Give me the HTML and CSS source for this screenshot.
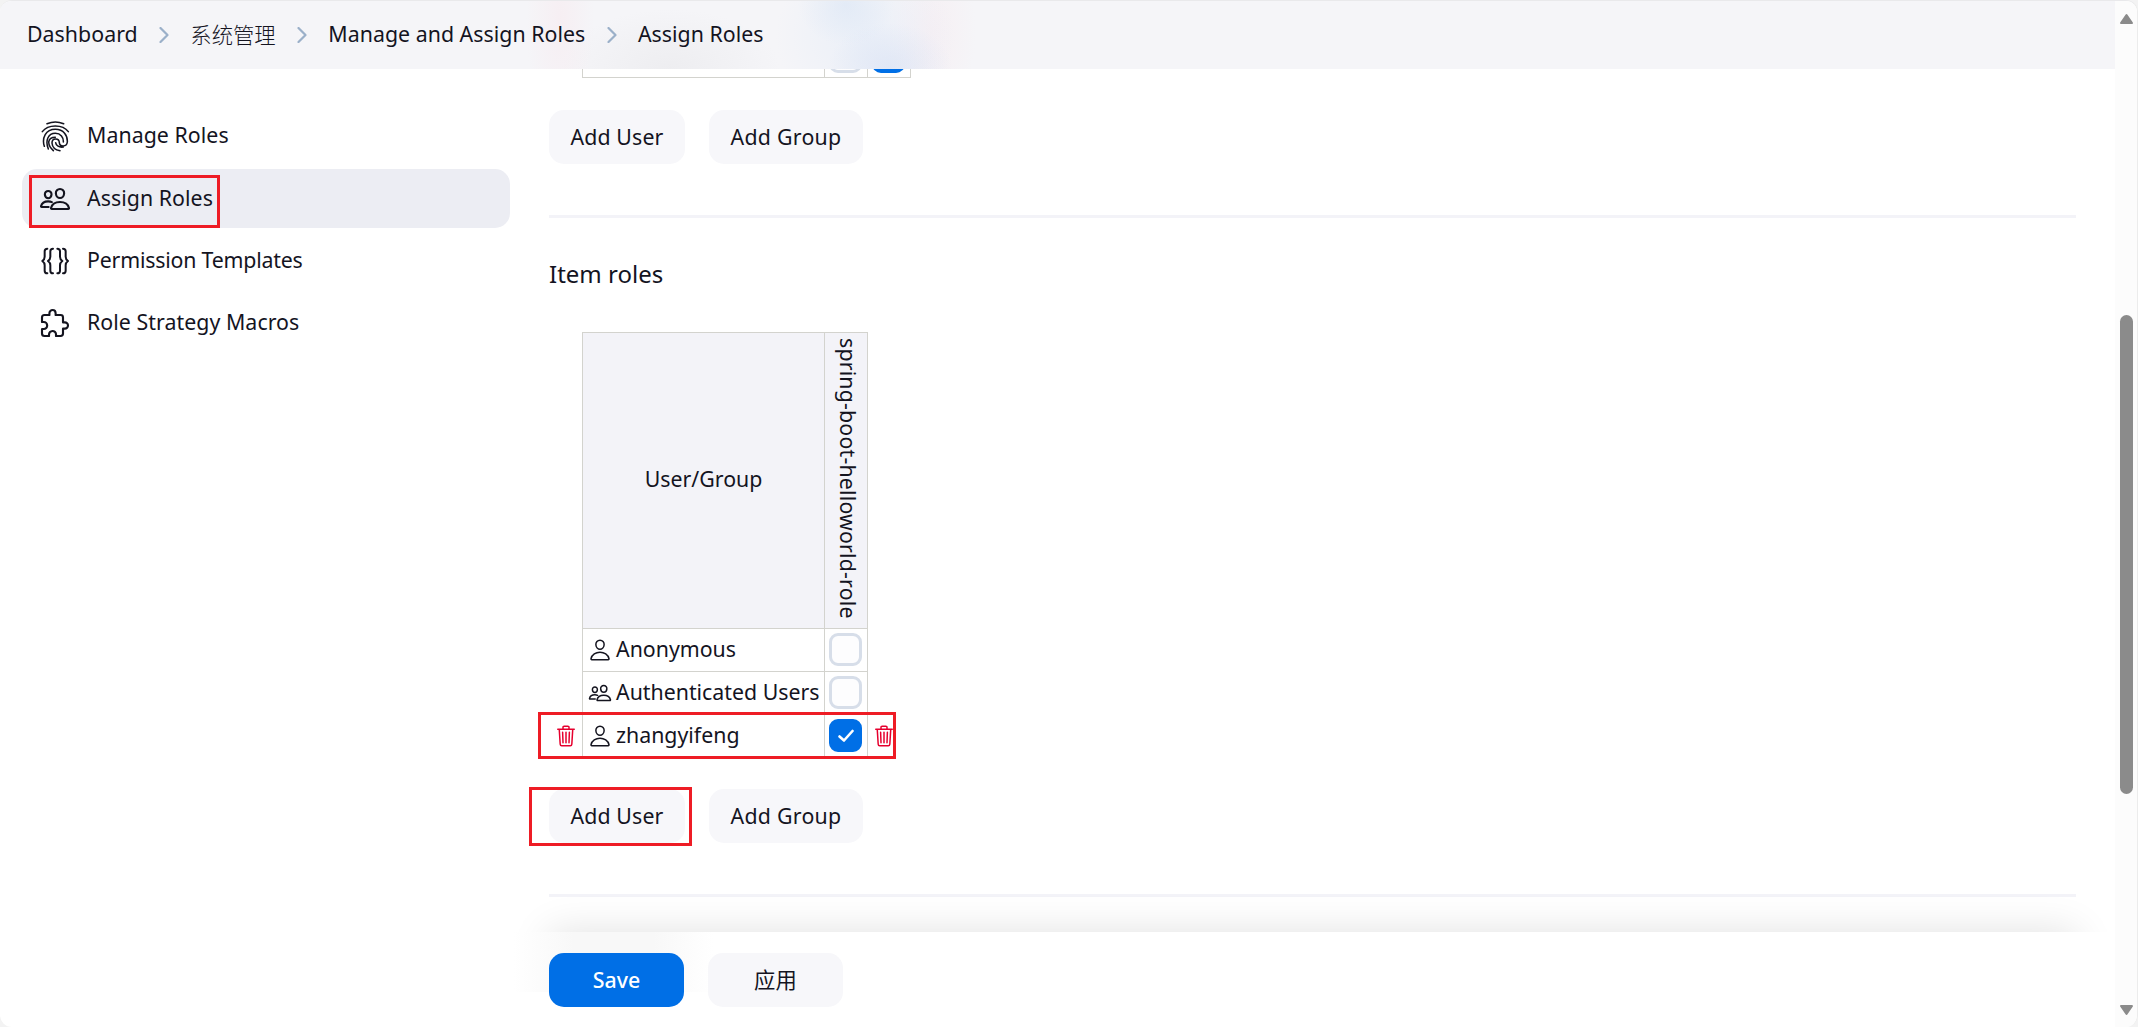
FILE: index.html
```html
<!DOCTYPE html>
<html lang="en">
<head>
<meta charset="utf-8">
<title>Assign Roles</title>
<link rel="stylesheet" href="styles.css">
</head>
<body>
<svg class="defs" aria-hidden="true">
  <symbol id="people" viewBox="0 0 512 512">
    <path d="M402 168c-2.93 40.67-33.1 72-66 72s-63.12-31.32-66-72c-3-42.31 26.37-72 66-72s69 30.46 66 72z"/>
    <path d="M336 304c-65.17 0-127.84 32.37-143.54 95.41-2.08 8.34 3.15 16.59 11.72 16.59h263.65c8.57 0 13.77-8.25 11.72-16.59C463.85 335.36 401.18 304 336 304z"/>
    <path d="M200 185.94c-2.34 32.48-26.72 58.06-53 58.06s-50.7-25.57-53-58.06C91.61 152.15 115.34 128 147 128s55.39 24.77 53 57.94z"/>
    <path d="M206 306c-18.05-8.27-37.93-11.45-59-11.45-52 0-102.1 25.85-114.65 76.2-1.65 6.66 2.53 13.25 9.37 13.25H154"/>
  </symbol>
  <symbol id="person" viewBox="0 0 512 512">
    <path d="M344 144c-3.92 52.87-44 96-88 96s-84.15-43.12-88-96c-4-55 35-96 88-96s92 42 88 96z"/>
    <path d="M256 304c-87 0-175.3 48-191.64 138.6C62.39 453.52 68.57 464 80 464h352c11.44 0 17.62-10.48 15.65-21.4C431.3 352 343 304 256 304z"/>
  </symbol>
  <symbol id="trash" viewBox="0 0 512 512">
    <path d="M112 112l20 320c.95 18.49 14.4 32 32 32h184c17.67 0 30.87-13.51 32-32l20-320M80 112h352M192 112V72a23.93 23.93 0 0124-24h80a23.93 23.93 0 0124 24v40M256 176v224M184 176l8 224M328 176l-8 224"/>
  </symbol>
  <symbol id="chevron" viewBox="0 0 10 16">
    <path d="M1.5 1 8.5 8 1.5 15"/>
  </symbol>
</svg>

<div class="window">
  <div class="viewport">
    <header class="breadcrumbs">
      <a class="crumb">Dashboard</a>
      <svg class="chevron"><use href="#chevron"/></svg>
      <a class="crumb cjk">系统管理</a>
      <svg class="chevron"><use href="#chevron"/></svg>
      <a class="crumb">Manage and Assign Roles</a>
      <svg class="chevron"><use href="#chevron"/></svg>
      <a class="crumb">Assign Roles</a>
    </header>

    <div class="page">
      <nav class="sidebar">
        <a class="task">
          <svg class="task-icon finger" viewBox="0 0 96 96"><path d="M24 11Q49 1 74 11M10 35C27 12 71 12 88 35M16 79C8 54 20 28 49 28C74 28 86 46 85 66C83 82 62 81 61 68C60 53 39 54 39 69C40 83 49 90 63 92M28 87C18 62 27 40 49 40C65 40 74 52 73 66M43 92C22 72 26 52 49 52M50 68C51 77 60 83 73 81"/></svg>
          <span>Manage Roles</span>
        </a>
        <a class="task task-active">
          <svg class="task-icon ion"><use href="#people"/></svg>
          <span>Assign Roles</span>
        </a>
        <a class="task">
          <svg class="task-icon braces" viewBox="0 0 96 96"><path d="M25 11Q17 11 17 19V35Q17 43 10 48Q17 53 17 61V77Q17 85 25 85M42 11Q34 11 34 19V35Q34 43 27 48Q34 53 34 61V77Q34 85 42 85M55 11Q63 11 63 19V35Q63 43 70 48Q63 53 63 61V77Q63 85 55 85M72 11Q80 11 80 19V35Q80 43 87 48Q80 53 80 61V77Q80 85 72 85"/></svg>
          <span class="t-templates">Permission Templates</span>
        </a>
        <a class="task">
          <svg class="task-icon ion" viewBox="0 0 512 512"><path d="M413.66 246.1H386a2 2 0 01-2-2v-77.24A38.86 38.86 0 00345.14 128H267.9a2 2 0 01-2-2V98.34c0-27.14-21.5-49.86-48.64-50.33a49.53 49.53 0 00-50.4 49.51V126a2 2 0 01-2 2H87.62A39.74 39.74 0 0048 167.62V238a2 2 0 002 2h26.91c29.37 0 53.68 25.48 54.09 54.85.42 29.87-23.51 57.15-53.29 57.15H50a2 2 0 00-2 2v70.38A39.74 39.74 0 0087.62 464H158a2 2 0 002-2v-20.93c0-30.28 24.75-56.35 55-57.06 30.1-.7 57 20.31 57 50.28V462a2 2 0 002 2h71.14A38.86 38.86 0 00384 425.14v-78a2 2 0 012-2h28.48c27.63 0 49.52-22.67 49.52-50.4s-23.2-48.64-50.34-48.64z"/></svg>
          <span>Role Strategy Macros</span>
        </a>
      </nav>

      <main class="main">
        <div class="table-tail">
          <div class="tail-name"></div>
          <div class="tail-cell"><span class="check"></span></div>
          <div class="tail-cell"><span class="check check-on"></span></div>
        </div>
        <div class="actions">
          <button class="button">Add User</button>
          <button class="button button-group">Add Group</button>
        </div>
        <hr class="rule">
        <h2 class="heading">Item roles</h2>

        <div class="roles">
          <div class="cell head">User/Group</div>
          <div class="cell head last"><span class="vertical">spring-boot-helloworld-role</span></div>

          <div class="cell name"><svg class="icon"><use href="#person"/></svg><span>Anonymous</span></div>
          <div class="cell last box"><span class="check"></span></div>

          <div class="cell name"><svg class="icon"><use href="#people"/></svg><span>Authenticated Users</span></div>
          <div class="cell last box"><span class="check"></span></div>

          <svg class="icon trash trash-left"><use href="#trash"/></svg>
          <div class="cell name bottom"><svg class="icon"><use href="#person"/></svg><span>zhangyifeng</span></div>
          <div class="cell last box bottom"><span class="check check-on"><svg class="tick" viewBox="0 0 16 14"><path d="M1.5 7.5 6 11.5 14.5 2"/></svg></span></div>
          <svg class="icon trash trash-right"><use href="#trash"/></svg>
        </div>

        <div class="actions actions-item">
          <button class="button">Add User</button>
          <button class="button button-group">Add Group</button>
        </div>
        <hr class="rule">
        <div class="shade"></div>
      </main>

      <footer class="footer">
        <button class="button primary">Save</button>
        <button class="button cjk">应用</button>
      </footer>
    </div>
  </div>

  <div class="scrollbar">
    <svg class="arrow" viewBox="0 0 15 12"><path d="M7.5 2 13 10H2z"/></svg>
    <div class="thumb"></div>
    <svg class="arrow" viewBox="0 0 15 12"><path d="M7.5 10 13 2H2z"/></svg>
  </div>
</div>

<div class="mark mark-nav"></div>
<div class="mark mark-row"></div>
<div class="mark mark-add"></div>
</body>
</html>
```
FILE: styles.css
```css
* { box-sizing: border-box; }

body {
  margin: 0;
  width: 2138px;
  height: 1027px;
  overflow: hidden;
  position: relative;
  background: #f3f3f3;
  color: #14141f;
  font: 21.33px/30px "Noto Sans", "Noto Sans CJK SC", sans-serif;
}

.defs { display: none; }

.window {
  display: flex;
  height: 1027px;
  border-top: 1px solid #e9e9eb;
  border-right: 1px solid #ececec;
  border-radius: 12px;
  overflow: hidden;
  background: #fff;
}

.viewport {
  flex: 1;
  display: flex;
  flex-direction: column;
}

/* Breadcrumb bar */
.breadcrumbs {
  display: flex;
  align-items: center;
  height: 68px;
  padding: 0 0 3px 27px;
  background:
    radial-gradient(ellipse 48px 40px at 846px 4px, rgba(212, 226, 244, .45), transparent),
    radial-gradient(ellipse 62px 44px at 890px 66px, rgba(210, 221, 243, .5), transparent),
    radial-gradient(ellipse 90px 80px at 865px 35px, rgba(230, 237, 248, .7), transparent),
    radial-gradient(ellipse 44px 90px at 932px 30px, rgba(247, 234, 239, .55), transparent),
    radial-gradient(ellipse 34px 110px at 560px 20px, rgba(247, 234, 239, .6), transparent),
    radial-gradient(ellipse 110px 60px at 670px 68px, rgba(232, 232, 235, .6), transparent),
    #f5f5f8;
}
.chevron {
  width: 10px;
  height: 16px;
  margin: 3px 21.3px 0;
  fill: none;
  stroke: #9bb0c9;
  stroke-width: 2.2;
  stroke-linecap: round;
  stroke-linejoin: round;
}
.crumb { letter-spacing: .03px; }
.cjk { font-family: "Noto Sans CJK SC", sans-serif; font-weight: 300; }

.page {
  flex: 1;
  display: grid;
  grid-template: 863px 95px / 549px 1fr;
}

/* Side navigation */
.sidebar {
  grid-row: 1 / 3;
  display: flex;
  flex-direction: column;
  gap: 3.4px;
  padding: 38px 39px 0 22px;
}
.task {
  display: flex;
  align-items: center;
  gap: 16px;
  height: 58.8px;
  padding: 0 0 0 17px;
  border-radius: 15px;
}
.task span { padding-bottom: 2px; letter-spacing: .05px; }
.task-active { background: #ecedf3; }
.task-icon {
  width: 32px;
  height: 32px;
  fill: none;
  stroke: #14141f;
  stroke-linecap: round;
  stroke-linejoin: round;
}
.task-icon.ion { stroke-width: 34; }
.task-icon.finger { stroke-width: 4.6; }
.task-icon.braces { stroke-width: 6; }
.task .t-templates { letter-spacing: -.2px; }

/* Main column */
.main {
  position: relative;
  padding-right: 39px;
}
.table-tail {
  display: flex;
  width: 329px;
  height: 9px;
  margin-left: 33px;
  overflow: hidden;
  border: solid #d3d3ce;
  border-width: 0 1px 1px;
}
.tail-name { width: 241px; }
.tail-cell {
  display: flex;
  align-items: flex-end;
  width: 43px;
  height: 9px;
  padding: 0 0 5px 4px;
  border-left: 1px solid #d3d3ce;
}

.actions {
  display: flex;
  gap: 24px;
  margin-top: 32px;
}
.actions-item { margin-top: 31px; }
.button {
  flex: none;
  width: 136px;
  height: 54px;
  padding: 0;
  border: 0;
  border-radius: 15px;
  background: #f7f7fa;
  color: inherit;
  font: inherit;
  letter-spacing: .1px;
}
.button-group { width: 154px; letter-spacing: .25px; }

.rule {
  height: 3px;
  margin: 51px 0 0;
  border: 0;
  background: #f3f3f8;
}
.heading {
  margin: 38px 0 0;
  font-size: 24px;
  font-weight: 400;
  line-height: 36px;
}

.roles {
  position: relative;
  display: grid;
  grid-template: 296px 43px 43px 44px / 242px 44px;
  width: 286px;
  margin: 40px 0 0 33px;
}
.cell {
  display: flex;
  align-items: center;
  justify-content: center;
  border: solid #d3d3ce;
  border-width: 1px 0 0 1px;
}
.last { border-right-width: 1px; }
.bottom { border-bottom-width: 1px; }
.head { background: #f3f3f8; }
.head:first-child { padding-bottom: 3px; }
.head.last { padding: 0 0 4px 3px; }
.vertical {
  writing-mode: vertical-rl;
  letter-spacing: .18px;
}
.name {
  justify-content: flex-start;
  gap: 4px;
  padding: 0 0 1px 5px;
}
.name span { padding-bottom: 1px; }
.box {
  justify-content: flex-start;
  padding: 0 0 1px 4px;
}
.icon {
  flex: none;
  width: 24px;
  height: 24px;
  fill: none;
  stroke: #14141f;
  stroke-width: 32;
  stroke-linecap: round;
  stroke-linejoin: round;
}
.trash {
  position: absolute;
  bottom: 10px;
  stroke: #e6002e;
}
.trash-left { left: -28px; }
.trash-right { right: -28px; }

.check {
  flex: none;
  display: flex;
  align-items: center;
  justify-content: center;
  width: 33px;
  height: 33px;
  border: 3px solid #d7dee9;
  border-radius: 9px;
  background: #fdfdfe;
}
.check-on {
  border-color: #006fe6;
  background: #006fe6;
}
.tick {
  width: 16px;
  height: 14px;
  fill: none;
  stroke: #fff;
  stroke-width: 2.6;
  stroke-linecap: round;
  stroke-linejoin: round;
}

/* Haze above the sticky footer */
.shade {
  position: absolute;
  left: -42px;
  right: -4px;
  bottom: 0;
  height: 44px;
  overflow: hidden;
}
.shade::after {
  content: "";
  display: block;
  height: 95px;
  margin: 44px 42px 0 42px;
  box-shadow: 0 0 40px rgba(0, 0, 0, .12);
}

.footer {
  display: flex;
  gap: 24px;
  margin-left: -36px;
  padding: 21px 0 0 36px;
  background: linear-gradient(90deg, #fff, #f8f8f8 60px 140px, #fff 200px) no-repeat 0 0 / 200px 60px;
}
.footer .button { width: 135px; }
.footer .primary { background: #006fe6; color: #fff; font-weight: 500; letter-spacing: 0; }

/* Scrollbar */
.scrollbar {
  display: flex;
  flex-direction: column;
  align-items: center;
  justify-content: space-between;
  width: 22px;
  padding: 12px 0 11px;
  background: #fcfcfc;
}
.arrow {
  width: 15px;
  height: 12px;
  fill: #8b8b8b;
  stroke: #8b8b8b;
  stroke-width: 2;
  stroke-linejoin: round;
}
.thumb {
  width: 13px;
  height: 479px;
  margin-bottom: -79px;
  border-radius: 7px;
  background: #8b8b8b;
}

/* Highlight rectangles drawn over the page */
.mark {
  position: absolute;
  border: 3px solid #ee1c25;
}
.mark-nav { left: 29px; top: 175px; width: 191px; height: 53px; }
.mark-row { left: 538px; top: 712px; width: 358px; height: 47px; }
.mark-add { left: 529px; top: 787px; width: 163px; height: 59px; }
```
